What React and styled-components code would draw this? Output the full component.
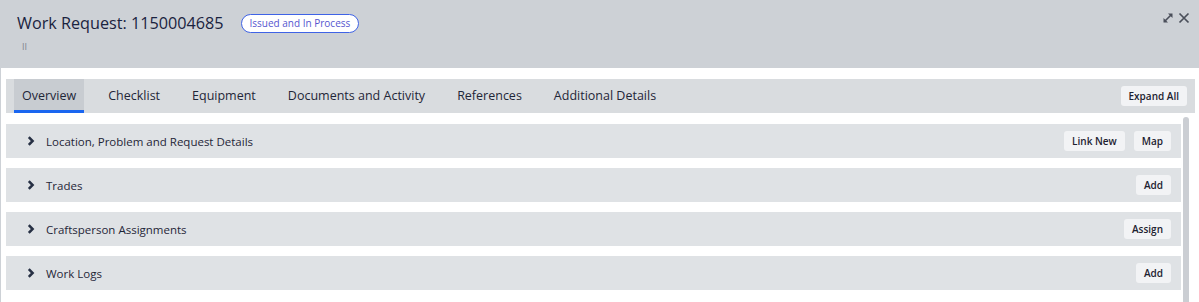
import styled, { createGlobalStyle } from 'styled-components'

const GlobalStyle = createGlobalStyle`
  html, body {
    margin: 0;
    padding: 0;
    background: #cdd1d6;
    font-family: 'Open Sans', 'Liberation Sans', sans-serif;
  }
`

const tabs = [
  'Overview',
  'Checklist',
  'Equipment',
  'Documents and Activity',
  'References',
  'Additional Details',
]

const sections = [
  { title: 'Location, Problem and Request Details', actions: ['Link New', 'Map'] },
  { title: 'Trades', actions: ['Add'] },
  { title: 'Craftsperson Assignments', actions: ['Assign'] },
  { title: 'Work Logs', actions: ['Add'] },
]

const Chevron = () => (
  <svg width='8' height='10' viewBox='0 0 8 10'>
    <path d='M1.8 1.2 L5.6 5 L1.8 8.8' fill='none' stroke='#273044' strokeWidth='2.5' />
  </svg>
)

const ExpandIcon = () => (
  <svg width='12' height='12' viewBox='0 0 12 12'>
    <path d='M2.5 9.5 L9.5 2.5' stroke='#4a4f5a' strokeWidth='1.6' />
    <path d='M6 1.5 H10.5 V6 Z' fill='#4a4f5a' />
    <path d='M1.5 6 V10.5 H6 Z' fill='#4a4f5a' />
  </svg>
)

const CloseIcon = () => (
  <svg width='12' height='12' viewBox='0 0 12 12'>
    <path d='M1.5 1.5 L10.5 10.5 M10.5 1.5 L1.5 10.5' stroke='#4a4f5a' strokeWidth='1.7' />
  </svg>
)

const App = () => {
  return (
    <>
      <GlobalStyle />
      <Page>
        <Header>
          <TitleRow>
            <Title>Work Request: 1150004685</Title>
            <Badge>Issued and In Process</Badge>
          </TitleRow>
          <Handle>II</Handle>
          <HeaderIcons>
            <IconButton><ExpandIcon /></IconButton>
            <IconButton><CloseIcon /></IconButton>
          </HeaderIcons>
        </Header>
        <Panel>
          <TabBar>
            <Tabs>
              {tabs.map((t, i) => (
                <Tab key={t} $active={i === 0}>{t}</Tab>
              ))}
            </Tabs>
            <SmallButton>Expand All</SmallButton>
          </TabBar>
          <Body>
            <Sections>
              {sections.map((s) => (
                <Row key={s.title}>
                  <RowTitle>
                    <Chevron />
                    <span>{s.title}</span>
                  </RowTitle>
                  <Actions>
                    {s.actions.map((a) => (
                      <SmallButton key={a}>{a}</SmallButton>
                    ))}
                  </Actions>
                </Row>
              ))}
            </Sections>
            <Scrollbar />
          </Body>
        </Panel>
      </Page>
    </>
  )
}

const Page = styled.div`
  width: 1199px;
  height: 302px;
  overflow: hidden;
  display: flex;
  flex-direction: column;
`

const Header = styled.div`
  position: relative;
  height: 68px;
  box-sizing: border-box;
  padding: 12px 17px 0;
  background: #cdd1d6;
`

const TitleRow = styled.div`
  display: flex;
  align-items: center;
  gap: 17px;
`

const Title = styled.h1`
  margin: 0;
  font-size: 16.2px;
  font-weight: 450;
  color: #1a2340;
  line-height: 22px;
`

const Badge = styled.span`
  display: inline-flex;
  align-items: center;
  height: 19px;
  box-sizing: border-box;
  padding: 0 8px;
  border: 1px solid #3f63e6;
  border-radius: 10px;
  background: #fff;
  color: #5656cf;
  font-size: 10px;
`

const Handle = styled.div`
  margin: 8px 0 0 5px;
  font-size: 9px;
  line-height: 10px;
  color: #7d838c;
`

const HeaderIcons = styled.div`
  position: absolute;
  top: 12px;
  right: 9px;
  display: flex;
  gap: 4px;
`

const IconButton = styled.span`
  display: flex;
  align-items: center;
  justify-content: center;
  width: 12px;
  height: 12px;
`

const Panel = styled.div`
  flex: 1;
  margin-left: 1px;
  background: #fff;
  padding: 11px 4px 0 5px;
  display: flex;
  flex-direction: column;
  gap: 11px;
  min-height: 0;
`

const TabBar = styled.div`
  display: flex;
  align-items: center;
  justify-content: space-between;
  height: 34px;
  padding: 0 8px;
  background: #d9dcdf;
`

const Tabs = styled.div`
  display: flex;
  height: 100%;
  gap: 16px;
`

const Tab = styled.div`
  display: flex;
  align-items: center;
  box-sizing: border-box;
  height: 100%;
  padding: 1px 8px 0;
  font-size: 12.5px;
  color: #1f2638;
  background: ${(p) => (p.$active ? '#c8ccd1' : 'transparent')};
  border-bottom: 3px solid ${(p) => (p.$active ? '#1a66f0' : 'transparent')};
`

const SmallButton = styled.button`
  height: 20px;
  padding: 0 8px;
  border: none;
  border-radius: 3px;
  background: #f2f3f5;
  font-family: 'Open Sans', 'Liberation Sans', sans-serif;
  font-size: 10px;
  font-weight: 600;
  color: #1d2230;
  cursor: pointer;
`

const Body = styled.div`
  display: flex;
  gap: 2px;
  flex: 1;
  min-height: 0;
`

const Sections = styled.div`
  flex: 1;
  display: flex;
  flex-direction: column;
  gap: 10px;
`

const Row = styled.div`
  display: flex;
  align-items: center;
  justify-content: space-between;
  height: 34px;
  flex-shrink: 0;
  padding: 0 10px 0 21px;
  background: #dfe2e5;
`

const RowTitle = styled.div`
  display: flex;
  align-items: center;
  gap: 11px;
  font-size: 11.5px;
  color: #1f2638;
`

const Actions = styled.div`
  display: flex;
  gap: 9px;
`

const Scrollbar = styled.div`
  width: 6px;
  margin-top: -7px;
  margin-right: 6px;
  background: #cbced3;
  border-radius: 3px 3px 0 0;
`

export default App
